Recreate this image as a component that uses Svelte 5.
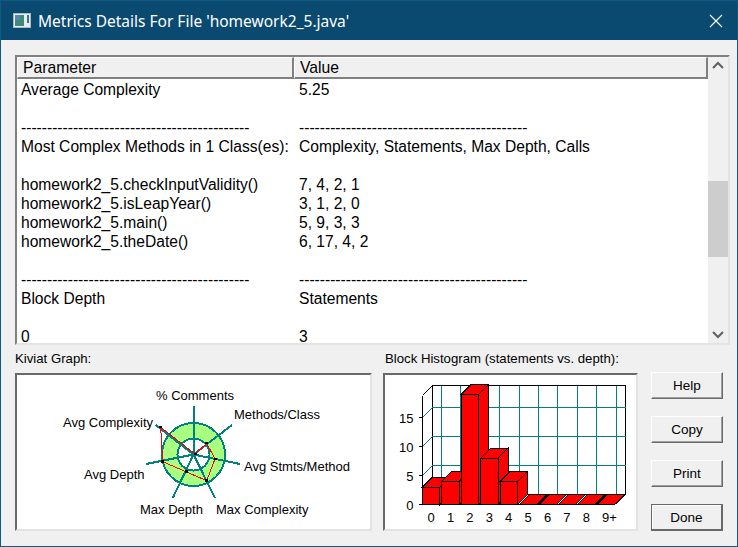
<script>
	const dashes = '--------------------------------------------';
	const rows = [
		['Average Complexity', '5.25'],
		['', ''],
		[dashes, dashes],
		['Most Complex Methods in 1 Class(es):', 'Complexity, Statements, Max Depth, Calls'],
		['', ''],
		['homework2_5.checkInputValidity()', '7, 4, 2, 1'],
		['homework2_5.isLeapYear()', '3, 1, 2, 0'],
		['homework2_5.main()', '5, 9, 3, 3'],
		['homework2_5.theDate()', '6, 17, 4, 2'],
		['', ''],
		[dashes, dashes],
		['Block Depth', 'Statements'],
		['', ''],
		['0', '3']
	];

	// kiviat, coordinates inside the panel
	const cx = 176.5;
	const cy = 79.5;
	const spokes = [
		[177, 31], [215, 50], [223, 89], [198, 123], [155.7, 123], [129, 89], [138.7, 50]
	];
	const redLine = [
		[143.7, 52.3], [178, 79], [189.7, 68.3], [198, 84], [189.7, 105.7], [169, 96.7], [145.7, 86.7]
	];
	const kiviatLabels = [
		{ x: 139, y: 25, text: '% Comments' },
		{ x: 217, y: 44, text: 'Methods/Class' },
		{ x: 227, y: 96, text: 'Avg Stmts/Method' },
		{ x: 199, y: 139, text: 'Max Complexity' },
		{ x: 123, y: 139, text: 'Max Depth' },
		{ x: 67, y: 104, text: 'Avg Depth' },
		{ x: 46, y: 52, text: 'Avg Complexity' }
	];

	// histogram, coordinates inside the panel
	const originX = 37.5;
	const baseY = 129.5;
	const step = 19.4;
	const barW = 17.4;
	const unit = 5.8;
	const depth = 10;
	const wallTop = 10.5;
	const counts = [3, 4, 19, 8, 4, 0, 0, 0, 0, 0];
	const xLabels = ['0', '1', '2', '3', '4', '5', '6', '7', '8', '9+'];
	const yTicks = [0, 5, 10, 15];
	const backLeft = originX + depth;
	const backRight = originX + step * 10 - 1 + depth;

	function pts(list) {
		return list.map((p) => p.join(',')).join(' ');
	}

	const buttons = ['Help', 'Copy', 'Print', 'Done'];
</script>

<div class="window">
	<div class="titlebar">
		<svg class="appicon" width="18" height="16" viewBox="0 0 18 16">
			<rect x="0.5" y="0.5" width="17" height="14" fill="#e8eef0" stroke="#a8bcc6" />
			<rect x="2" y="2" width="9" height="11" fill="#3f8a78" />
			<rect x="2" y="2" width="5" height="5" fill="#5f86a8" />
			<rect x="14" y="2" width="2" height="8" fill="#44707a" />
		</svg>
		<span class="title">Metrics Details For File 'homework2_5.java'</span>
		<svg class="close" width="14" height="14" viewBox="0 0 14 14">
			<path d="M1 1 L13 13 M13 1 L1 13" stroke="#fff" stroke-width="1.1" fill="none" />
		</svg>
	</div>

	<div class="body">
		<div class="listbox">
			<div class="listmain">
				<div class="header">
					<div class="hcell first">Parameter</div>
					<div class="hcell second">Value</div>
				</div>
				<div class="rows">
					{#each rows as row}
						<div class="row">
							<span class="c1">{row[0]}</span>
							<span class="c2">{row[1]}</span>
						</div>
					{/each}
				</div>
			</div>
			<div class="scrollbar">
				<svg class="arrow" width="20" height="17" viewBox="0 0 20 17">
					<path d="M5 11 L10 6 L15 11" stroke="#606060" stroke-width="2" fill="none" />
				</svg>
				<div class="track"><div class="thumb"></div></div>
				<svg class="arrow" width="20" height="17" viewBox="0 0 20 17">
					<path d="M5 6 L10 11 L15 6" stroke="#606060" stroke-width="2" fill="none" />
				</svg>
			</div>
		</div>

		<div class="lower">
			<div class="graph kiviat">
				<div class="caption">Kiviat Graph:</div>
				<div class="panel">
					<svg width="353" height="154" viewBox="0 0 353 154" shape-rendering="crispEdges">
						<circle {cx} {cy} r="24" fill="none" stroke="#a9ff7f" stroke-width="15" />
						<circle {cx} {cy} r="31.5" fill="none" stroke="#008080" stroke-width="2" />
						<circle {cx} {cy} r="16" fill="#fff" stroke="#008080" stroke-width="2" />
						{#each spokes as s}
							<line x1={cx} y1={cy} x2={s[0]} y2={s[1]} stroke="#008080" stroke-width="2" />
						{/each}
						<polygon points={pts(redLine)} fill="none" stroke="#f00" stroke-width="1" />
						{#each redLine as p}
							<rect x={p[0] - 1.5} y={p[1] - 1.5} width="3" height="2.5" fill="#000" />
						{/each}
						{#each kiviatLabels as l}
							<text x={l.x} y={l.y} class="svgtext">{l.text}</text>
						{/each}
					</svg>
				</div>
			</div>

			<div class="graph histo">
				<div class="caption">Block Histogram (statements vs. depth):</div>
				<div class="panel">
					<svg width="253" height="154" viewBox="0 0 253 154" shape-rendering="crispEdges">
						<!-- back wall -->
						<rect x={backLeft} y={wallTop} width={backRight - backLeft} height={baseY - depth - wallTop} fill="#fff" stroke="#000" />
						{#each counts as _, i}
							<line x1={originX + 19 + step * i} y1={wallTop} x2={originX + 19 + step * i} y2={baseY - depth} stroke="#008080" />
						{/each}
						{#each yTicks.slice(1) as t}
							<line x1={backLeft} y1={baseY - t * unit - depth} x2={backRight} y2={baseY - t * unit - depth} stroke="#008080" />
							<line x1={originX} y1={baseY - t * unit} x2={backLeft} y2={baseY - t * unit - depth} stroke="#008080" />
						{/each}

						<!-- side wall and floor -->
						<line x1={originX} y1={wallTop + depth} x2={backLeft} y2={wallTop} stroke="#000" />
						<line x1={backRight - depth} y1={baseY} x2={backRight} y2={baseY - depth} stroke="#000" />
						<line x1={originX} y1={baseY} x2={backLeft} y2={baseY - depth} stroke="#000" />

						<!-- bars, left to right so each one covers the side of the last -->
						{#each counts as c, i}
							{@const x = originX + step * i}
							{@const top = baseY - c * unit}
							{#if c > 0}
								<polygon
									points={pts([[x + barW, top], [x + barW + depth, top - depth], [x + barW + depth, baseY - depth], [x + barW, baseY]])}
									fill="#f00" stroke="#000" />
								<polygon
									points={pts([[x, top], [x + depth, top - depth], [x + barW + depth, top - depth], [x + barW, top]])}
									fill="#f00" stroke="#000" />
								<rect x={x} y={top} width={barW} height={c * unit} fill="#f00" stroke="#000" />
							{:else}
								<polygon
									points={pts([[x, baseY], [x + depth, baseY - depth], [x + barW + depth, baseY - depth], [x + barW, baseY]])}
									fill="#f00" stroke="#000" />
							{/if}
						{/each}

						<!-- axes -->
						<line x1={originX} y1={wallTop + depth} x2={originX} y2={baseY} stroke="#000" />
						<line x1={originX} y1={baseY} x2={originX + step * 10 - 2} y2={baseY} stroke="#000" />
						{#each yTicks as t}
							<line x1={originX - 4} y1={baseY - t * unit} x2={originX} y2={baseY - t * unit} stroke="#000" />
							<text x={originX - 9} y={baseY - t * unit + 5} text-anchor="end" class="axis">{t}</text>
						{/each}
						{#each xLabels as l, i}
							<text x={originX + 5 + step * i} y="147" class="axis">{l}</text>
						{/each}
					</svg>
				</div>
			</div>

			<div class="buttons">
				{#each buttons as b}
					<button class:default={b === 'Done'}>{b}</button>
				{/each}
			</div>
		</div>
	</div>
</div>

<style>
	:global(body) {
		margin: 0;
		background: #0a4a70;
	}

	.window {
		width: 738px;
		height: 547px;
		box-sizing: border-box;
		border: 1px solid #0f5a82;
		display: flex;
		flex-direction: column;
		background: #f0f0f0;
		font-family: "Liberation Sans", Arial, sans-serif;
		color: #000;
		overflow: hidden;
	}

	.titlebar {
		height: 39px;
		background: #0a4a70;
		display: flex;
		align-items: center;
		padding: 0 14px 0 12px;
		flex-shrink: 0;
	}

	.appicon {
		margin-right: 7px;
	}

	.title {
		flex: 1;
		color: #fff;
		font-family: "Noto Sans", "Open Sans", sans-serif;
		font-size: 15.5px;
		white-space: nowrap;
	}

	.body {
		flex: 1;
		display: flex;
		flex-direction: column;
		padding: 15px 8px 0 14px;
	}

	.listbox {
		height: 290px;
		width: 715px;
		box-sizing: border-box;
		display: flex;
		background: #fff;
		border-top: 2px solid #808080;
		border-left: 2px solid #808080;
		border-right: 2px solid #e3e3e3;
		border-bottom: 2px solid #e3e3e3;
		overflow: hidden;
	}

	.listmain {
		flex: 1;
		min-width: 0;
		display: flex;
		flex-direction: column;
	}

	.header {
		display: flex;
		height: 22px;
		flex-shrink: 0;
		font-size: 15.7px;
		line-height: 20px;
		background: #f0f0f0;
	}

	.hcell {
		box-sizing: border-box;
		border-top: 1px solid #fff;
		border-left: 1px solid #fff;
		border-right: 2px solid #808080;
		border-bottom: 2px solid #808080;
		padding-left: 5px;
	}

	.hcell.first {
		width: 277px;
	}

	.hcell.second {
		flex: 1;
	}

	.rows {
		font-size: 15.6px;
		line-height: 19px;
		padding-top: 1px;
	}

	.row {
		display: flex;
		height: 19px;
		white-space: nowrap;
	}

	.c1 {
		width: 282px;
		padding-left: 4px;
		box-sizing: border-box;
		flex-shrink: 0;
	}

	.scrollbar {
		width: 20px;
		flex-shrink: 0;
		display: flex;
		flex-direction: column;
		background: #f0f0f0;
	}

	.arrow {
		flex-shrink: 0;
		display: block;
	}

	.track {
		flex: 1;
		padding-top: 107px;
		box-sizing: border-box;
	}

	.thumb {
		height: 76px;
		background: #cdcdcd;
	}

	.lower {
		display: flex;
		margin-top: 5px;
	}

	.caption {
		font-size: 13.2px;
		height: 23px;
		line-height: 18px;
	}

	.panel {
		box-sizing: border-box;
		height: 158px;
		background: #fff;
		border-top: 2px solid #696969;
		border-left: 2px solid #696969;
		border-right: 2px solid #e3e3e3;
		border-bottom: 2px solid #e3e3e3;
		overflow: hidden;
	}

	.panel svg {
		display: block;
	}

	.kiviat {
		width: 357px;
		margin-right: 11px;
	}

	.histo {
		width: 255px;
	}

	.histo .caption {
		padding-left: 2px;
	}

	.svgtext {
		font-size: 13px;
		fill: #000;
	}

	.axis {
		font-size: 13px;
		fill: #000;
	}

	.buttons {
		display: flex;
		flex-direction: column;
		gap: 17px;
		margin: 22px 0 0 13px;
	}

	button {
		width: 72px;
		height: 27px;
		box-sizing: border-box;
		background: #f0f0f0;
		font-family: inherit;
		font-size: 13.5px;
		color: #000;
		padding: 0;
		border-top: 1px solid #fff;
		border-left: 1px solid #fff;
		border-right: 1px solid #696969;
		border-bottom: 1px solid #696969;
		box-shadow: inset -1px -1px 0 #a0a0a0;
	}

	button.default {
		border: 1px solid #696969;
		border-right-width: 2px;
		border-bottom-width: 2px;
		box-shadow: inset 1px 1px 0 #fff;
	}
</style>
